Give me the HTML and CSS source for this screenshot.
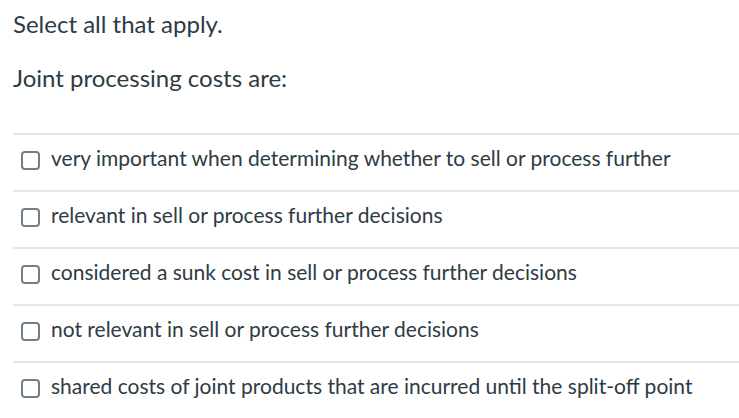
FILE: index.html
```html
<!DOCTYPE html>
<html lang="en">
<head>
<meta charset="utf-8">
<link rel="stylesheet" href="styles.css">
</head>
<body>
<div class="question">
  <p class="instr">Select all that apply.</p>
  <p class="prompt">Joint processing costs are:</p>
  <ul class="answers">
    <li class="answer"><span class="box"></span><span class="label">very important when determining whether to sell or process further</span></li>
    <li class="answer"><span class="box"></span><span class="label">relevant in sell or process further decisions</span></li>
    <li class="answer"><span class="box"></span><span class="label">considered a sunk cost in sell or process further decisions</span></li>
    <li class="answer"><span class="box"></span><span class="label">not relevant in sell or process further decisions</span></li>
    <li class="answer"><span class="box"></span><span class="label">shared costs of joint products that are incurred until the split-off point</span></li>
  </ul>
</div>
</body>
</html>
```
FILE: styles.css
```css
html, body {
  margin: 0;
  padding: 0;
  background: #ffffff;
}
body {
  font-family: Lato, "Open Sans", sans-serif;
  color: #2d3b45;
  font-size: 24px;
}
.question {
  padding: 9px 0 0 13px;
}
.instr {
  margin: 0;
  line-height: 30px;
}
.prompt {
  margin: 24px 0 0 0;
  line-height: 30px;
}
.answers {
  list-style: none;
  margin: 40px 0 0 0;
  padding: 0;
}
.answer {
  display: flex;
  align-items: flex-start;
  gap: 11px;
  border-top: 2px solid #e6e6e6;
  padding: 9px 0 18px 8px;
}
.box {
  width: 15px;
  height: 15px;
  margin-top: 7px;
  border: 2px solid #737f88;
  border-radius: 4px;
  flex: none;
}
.label {
  font-size: 21px;
  line-height: 28px;
}
```
